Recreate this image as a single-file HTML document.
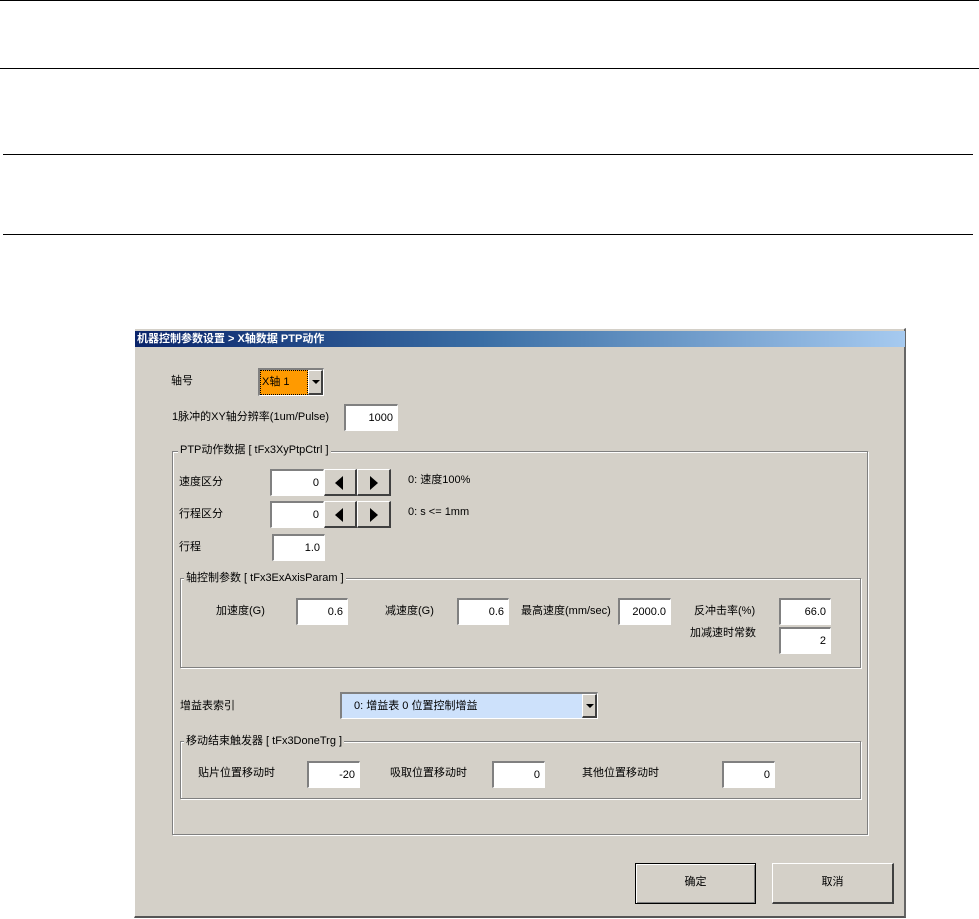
<!DOCTYPE html>
<html><head><meta charset="utf-8"><style>
html,body{margin:0;padding:0;background:#fff;width:979px;height:919px;overflow:hidden;position:relative;
font-family:"Liberation Sans","WenQuanYi Zen Hei","Noto Sans CJK SC",sans-serif;font-size:11px;color:#000}
.hl{position:absolute;height:1px;background:#000}
.a{position:absolute;white-space:nowrap;line-height:13px}
#dlg{position:absolute;left:134px;top:328px;width:772px;height:590px;background:#d4d0c8;
border-left:1px solid #fff;border-top:1px solid #fff;border-right:2px solid #666;border-bottom:2px solid #555;box-sizing:border-box}
#tb{position:absolute;left:135px;top:331px;width:770px;height:16px;background:linear-gradient(90deg,#0a246a 0%,#3a6ea5 45%,#a6caf0 100%);
color:#fff;font-weight:bold;font-size:11px;line-height:16px;padding-left:2px;box-sizing:border-box}
.in{position:absolute;background:#fff;box-sizing:border-box;border-top:2px solid #808080;border-left:2px solid #808080;
border-right:1px solid #fff;border-bottom:1px solid #fff;text-align:right;padding-right:4px;line-height:22px;font-size:11px}
.btn{position:absolute;background:#d4d0c8;box-sizing:border-box;border-top:1px solid #fff;border-left:1px solid #fff;
border-right:2px solid #404040;border-bottom:2px solid #404040;text-align:center}
.grp{position:absolute;box-sizing:border-box;border:1px solid #808080;box-shadow:1px 1px 0 #fff,inset 1px 1px 0 #fff}
.gl{position:absolute;background:#d4d0c8;padding:0 2px;line-height:13px;white-space:nowrap}
.tri{width:0;height:0;position:absolute}
</style></head><body>
<div class="hl" style="left:0;top:0;width:979px"></div>
<div class="hl" style="left:0;top:68px;width:979px"></div>
<div class="hl" style="left:3px;top:154px;width:970px"></div>
<div class="hl" style="left:3px;top:234px;width:970px"></div>

<div id="dlg"></div>
<div id="tb">机器控制参数设置 &gt; X轴数据 PTP动作</div>

<div class="a" style="left:171px;top:375px">轴号</div>
<div class="in" style="left:258px;top:368px;width:66px;height:28px;background:#fff"></div>
<div style="position:absolute;left:260px;top:370px;width:48px;height:25px;background:#ff9a00;border:1px dotted #000;box-sizing:border-box;line-height:22px;padding-left:1px">X轴 1</div>
<div class="btn" style="left:308px;top:370px;width:15px;height:25px"></div>
<div class="tri" style="left:312px;top:380px;border-left:4px solid transparent;border-right:4px solid transparent;border-top:4px solid #000"></div>

<div class="a" style="left:172px;top:411px">1脉冲的XY轴分辨率(1um/Pulse)</div>
<div class="in" style="left:344px;top:404px;width:54px;height:27px;line-height:24px">1000</div>

<div class="grp" style="left:172px;top:451px;width:696px;height:384px"></div>
<div class="gl" style="left:178px;top:444px">PTP动作数据 [ tFx3XyPtpCtrl ]</div>

<div class="a" style="left:179px;top:476px">速度区分</div>
<div class="in" style="left:270px;top:469px;width:54px;height:27px;line-height:24px">0</div>
<div class="btn" style="left:324px;top:469px;width:33px;height:27px"></div>
<div class="tri" style="left:335px;top:476px;border-top:7px solid transparent;border-bottom:7px solid transparent;border-right:8px solid #000"></div>
<div class="btn" style="left:357px;top:469px;width:34px;height:27px"></div>
<div class="tri" style="left:370px;top:476px;border-top:7px solid transparent;border-bottom:7px solid transparent;border-left:8px solid #000"></div>
<div class="a" style="left:408px;top:474px">0: 速度100%</div>

<div class="a" style="left:179px;top:508px">行程区分</div>
<div class="in" style="left:270px;top:501px;width:54px;height:27px;line-height:24px">0</div>
<div class="btn" style="left:324px;top:501px;width:33px;height:27px"></div>
<div class="tri" style="left:335px;top:508px;border-top:7px solid transparent;border-bottom:7px solid transparent;border-right:8px solid #000"></div>
<div class="btn" style="left:357px;top:501px;width:34px;height:27px"></div>
<div class="tri" style="left:370px;top:508px;border-top:7px solid transparent;border-bottom:7px solid transparent;border-left:8px solid #000"></div>
<div class="a" style="left:408px;top:506px">0: s &lt;= 1mm</div>

<div class="a" style="left:179px;top:541px">行程</div>
<div class="in" style="left:272px;top:534px;width:53px;height:27px;line-height:24px">1.0</div>

<div class="grp" style="left:180px;top:578px;width:681px;height:90px"></div>
<div class="gl" style="left:184px;top:572px">轴控制参数 [ tFx3ExAxisParam ]</div>
<div class="a" style="left:216px;top:605px">加速度(G)</div>
<div class="in" style="left:296px;top:598px;width:52px;height:27px;line-height:24px">0.6</div>
<div class="a" style="left:385px;top:605px">减速度(G)</div>
<div class="in" style="left:457px;top:598px;width:52px;height:27px;line-height:24px">0.6</div>
<div class="a" style="left:521px;top:605px">最高速度(mm/sec)</div>
<div class="in" style="left:618px;top:598px;width:53px;height:27px;line-height:24px">2000.0</div>
<div class="a" style="left:694px;top:605px">反冲击率(%)</div>
<div class="in" style="left:779px;top:598px;width:52px;height:27px;line-height:24px">66.0</div>
<div class="a" style="left:690px;top:627px">加减速时常数</div>
<div class="in" style="left:779px;top:627px;width:52px;height:27px;line-height:24px">2</div>

<div class="a" style="left:180px;top:700px">增益表索引</div>
<div class="in" style="left:340px;top:692px;width:258px;height:27px;background:#cde1fb;text-align:left;padding-left:12px;line-height:24px">0: 增益表 0 位置控制增益</div>
<div class="btn" style="left:582px;top:694px;width:15px;height:24px"></div>
<div class="tri" style="left:586px;top:704px;border-left:4px solid transparent;border-right:4px solid transparent;border-top:4px solid #000"></div>

<div class="grp" style="left:180px;top:741px;width:681px;height:58px"></div>
<div class="gl" style="left:184px;top:735px">移动结束触发器 [ tFx3DoneTrg ]</div>
<div class="a" style="left:198px;top:767px">贴片位置移动时</div>
<div class="in" style="left:307px;top:761px;width:53px;height:27px;line-height:24px">-20</div>
<div class="a" style="left:390px;top:767px">吸取位置移动时</div>
<div class="in" style="left:492px;top:761px;width:53px;height:27px;line-height:24px">0</div>
<div class="a" style="left:582px;top:767px">其他位置移动时</div>
<div class="in" style="left:722px;top:761px;width:53px;height:27px;line-height:24px">0</div>

<div class="btn" style="left:635px;top:863px;width:121px;height:41px;line-height:37px;border:1px solid #000;box-shadow:inset 1px 1px 0 #fff,inset -1px -1px 0 #808080">确定</div>
<div class="btn" style="left:772px;top:863px;width:122px;height:41px;line-height:37px">取消</div>
</body></html>
